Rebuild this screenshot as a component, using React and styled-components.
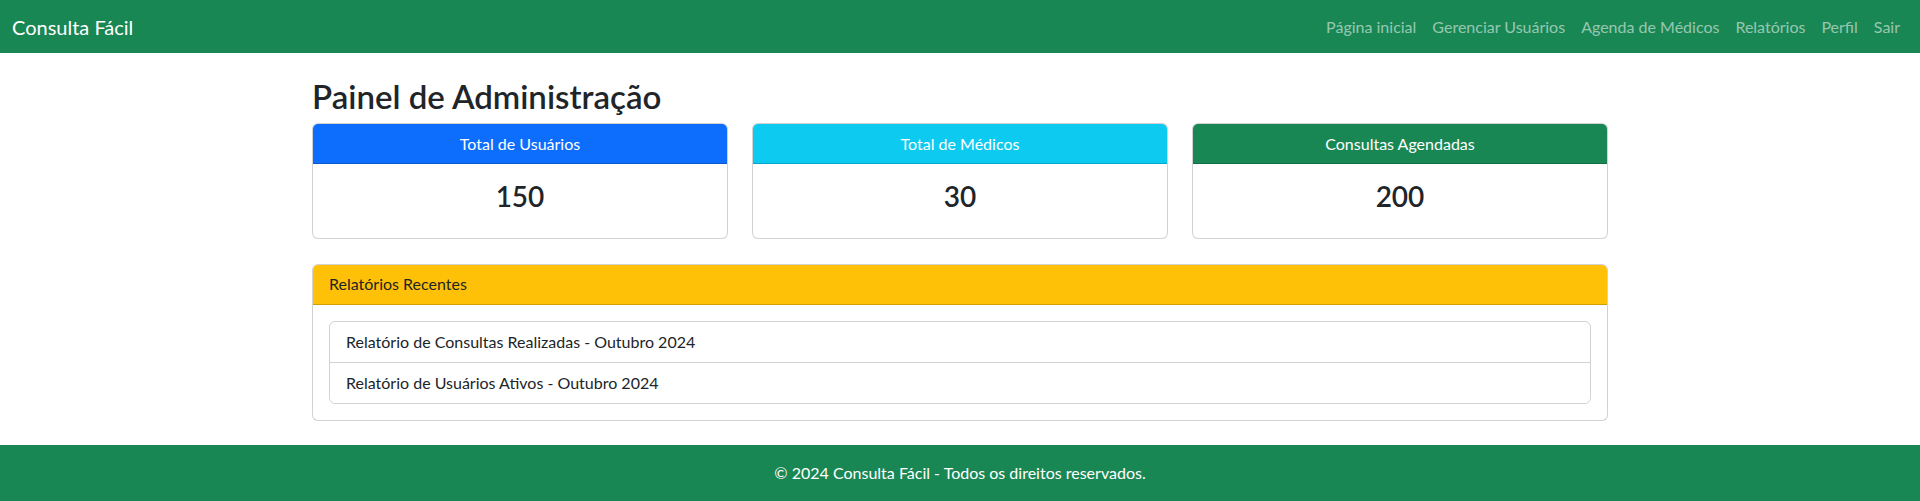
import styled, { createGlobalStyle } from 'styled-components';

const GlobalStyle = createGlobalStyle`
  *, *::before, *::after {
    box-sizing: border-box;
  }

  body {
    margin: 0;
    font-family: "Segoe UI", Lato, "Liberation Sans", sans-serif;
    font-size: 16px;
    line-height: 1.5;
    color: #212529;
    background: #fff;
  }
`;

const stats = [
  { title: 'Total de Usuários', value: 150, bg: '#0d6efd' },
  { title: 'Total de Médicos', value: 30, bg: '#0dcaf0' },
  { title: 'Consultas Agendadas', value: 200, bg: '#198754' },
];

const reports = [
  'Relatório de Consultas Realizadas - Outubro 2024',
  'Relatório de Usuários Ativos - Outubro 2024',
];

const links = [
  'Página inicial',
  'Gerenciar Usuários',
  'Agenda de Médicos',
  'Relatórios',
  'Perfil',
  'Sair',
];

const App = () => (
  <>
    <GlobalStyle />
    <Navbar>
      <Brand href="#">Consulta Fácil</Brand>
      <NavList>
        {links.map(link => (
          <NavLink key={link} href="#">
            {link}
          </NavLink>
        ))}
      </NavList>
    </Navbar>

    <Container>
      <Title>Painel de Administração</Title>

      <StatsRow>
        {stats.map(stat => (
          <Card key={stat.title}>
            <CardHeader $bg={stat.bg} $center>
              {stat.title}
            </CardHeader>
            <StatBody>
              <StatValue>{stat.value}</StatValue>
            </StatBody>
          </Card>
        ))}
      </StatsRow>

      <Card>
        <CardHeader $bg="#ffc107" $dark>
          Relatórios Recentes
        </CardHeader>
        <CardBody>
          <ListGroup>
            {reports.map(report => (
              <ListItem key={report}>{report}</ListItem>
            ))}
          </ListGroup>
        </CardBody>
      </Card>
    </Container>

    <Footer>© 2024 Consulta Fácil - Todos os direitos reservados.</Footer>
  </>
);

const Navbar = styled.nav`
  display: flex;
  align-items: center;
  justify-content: space-between;
  height: 53px;
  padding: 0 12px;
  background: #198754;
`;

const Brand = styled.a`
  font-size: 20px;
  color: #fff;
  text-decoration: none;
`;

const NavList = styled.div`
  display: flex;
`;

const NavLink = styled.a`
  padding: 8px;
  color: rgba(255, 255, 255, 0.55);
  text-decoration: none;
`;

const Container = styled.main`
  width: 1320px;
  margin: 24px auto 0;
  padding: 0 12px;
`;

const Title = styled.h2`
  margin: 0 0 8px;
  font-size: 33px;
  font-weight: 600;
  line-height: 38px;
`;

const StatsRow = styled.div`
  display: grid;
  grid-template-columns: repeat(3, 1fr);
  gap: 24px;
  margin-bottom: 25px;
`;

const Card = styled.div`
  display: flex;
  flex-direction: column;
  background: #fff;
  border: 1px solid rgba(0, 0, 0, 0.175);
  border-radius: 6px;
  overflow: hidden;
`;

const CardHeader = styled.div`
  padding: 7.5px 16px;
  background: ${({ $bg }) => $bg};
  color: ${({ $dark }) => ($dark ? '#212529' : '#fff')};
  text-align: ${({ $center }) => ($center ? 'center' : 'left')};
  border-bottom: 1px solid rgba(0, 0, 0, 0.175);
`;

const CardBody = styled.div`
  padding: 16px;
`;

const StatBody = styled(CardBody)`
  text-align: center;
`;

const StatValue = styled.h3`
  margin: 0 0 8px;
  font-size: 28px;
  font-weight: 600;
  line-height: 1.2;
`;

const ListGroup = styled.ul`
  margin: 0;
  padding: 0;
  list-style: none;
  border: 1px solid rgba(0, 0, 0, 0.175);
  border-radius: 6px;
`;

const ListItem = styled.li`
  padding: 8px 16px;
  border-top: 1px solid rgba(0, 0, 0, 0.175);

  &:first-child {
    border-top: none;
  }
`;

const Footer = styled.footer`
  margin-top: 24px;
  padding: 16px 0;
  background: #198754;
  color: #fff;
  text-align: center;
`;

export default App;
